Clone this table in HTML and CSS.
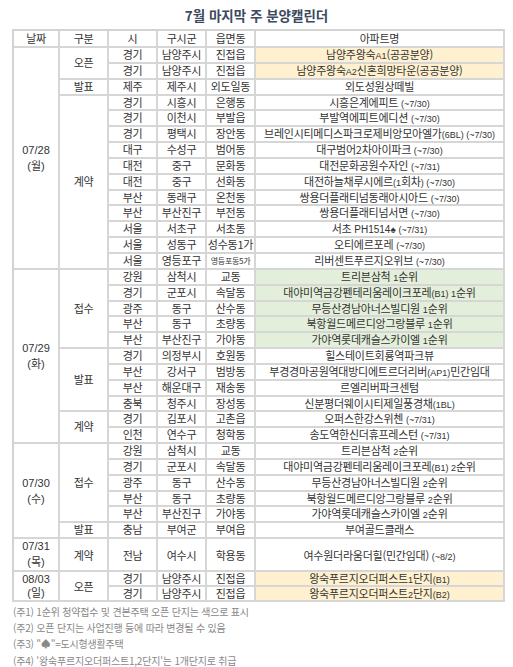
FILE: index.html
```html
<!DOCTYPE html>
<html lang="ko">
<head>
<meta charset="utf-8">
<title>7월 마지막 주 분양캘린더</title>
<link rel="stylesheet" href="styles.css">
</head>
<body>
<h1 class="title">7월 마지막 주 분양캘린더</h1>
<table class="cal">
<colgroup>
<col class="c-date"><col class="c-type"><col class="c-si"><col class="c-gu"><col class="c-dong"><col class="c-apt">
</colgroup>
<thead>
<tr><th>날짜</th><th>구분</th><th>시</th><th>구시군</th><th>읍면동</th><th>아파트명</th></tr>
</thead>
<tbody>
<tr><td rowspan="14" class="date">07/28<br>(월)</td><td rowspan="2">오픈</td><td>경기</td><td>남양주시</td><td>진접읍</td><td class="apt y">남양주왕숙<span class="en">A1</span>(공공분양)</td></tr>
<tr><td>경기</td><td>남양주시</td><td>진접읍</td><td class="apt y">남양주왕숙<span class="en">A2</span>신혼희망타운(공공분양)</td></tr>
<tr><td>발표</td><td>제주</td><td>제주시</td><td>외도일동</td><td class="apt">외도성원상떼빌</td></tr>
<tr><td rowspan="11">계약</td><td>경기</td><td>시흥시</td><td>은행동</td><td class="apt">시흥은계에피트 <span class="en">(~7/30)</span></td></tr>
<tr><td>경기</td><td>이천시</td><td>부발읍</td><td class="apt">부발역에피트에디션 <span class="en">(~7/30)</span></td></tr>
<tr><td>경기</td><td>평택시</td><td>장안동</td><td class="apt">브레인시티메디스파크로제비앙모아엘가<span class="en">(6BL) (~7/30)</span></td></tr>
<tr><td>대구</td><td>수성구</td><td>범어동</td><td class="apt">대구범어2차아이파크 <span class="en">(~7/30)</span></td></tr>
<tr><td>대전</td><td>중구</td><td>문화동</td><td class="apt">대전문화공원수자인 <span class="en">(~7/31)</span></td></tr>
<tr><td>대전</td><td>중구</td><td>선화동</td><td class="apt">대전하늘채루시에르<span class="en">(1</span>회차<span class="en">) (~7/30)</span></td></tr>
<tr><td>부산</td><td>동래구</td><td>온천동</td><td class="apt">쌍용더플래티넘동래아시아드 <span class="en">(~7/30)</span></td></tr>
<tr><td>부산</td><td>부산진구</td><td>부전동</td><td class="apt">쌍용더플래티넘서면 <span class="en">(~7/30)</span></td></tr>
<tr><td>서울</td><td>서초구</td><td>서초동</td><td class="apt">서초 <span class="en big">PH1514♠</span> <span class="en">(~7/31)</span></td></tr>
<tr><td>서울</td><td>성동구</td><td>성수동1가</td><td class="apt">오티에르포레 <span class="en">(~7/30)</span></td></tr>
<tr><td>서울</td><td>영등포구</td><td class="tiny">영등포동5가</td><td class="apt">리버센트푸르지오위브 <span class="en">(~7/30)</span></td></tr>

<tr><td rowspan="11" class="date">07/29<br>(화)</td><td rowspan="5">접수</td><td>강원</td><td>삼척시</td><td>교동</td><td class="apt g">트리븐삼척 <span class="en">1</span>순위</td></tr>
<tr><td>경기</td><td>군포시</td><td>속달동</td><td class="apt g">대야미역금강펜테리움레이크포레<span class="en">(B1) 1</span>순위</td></tr>
<tr><td>광주</td><td>동구</td><td>산수동</td><td class="apt g">무등산경남아너스빌디원 <span class="en">1</span>순위</td></tr>
<tr><td>부산</td><td>동구</td><td>초량동</td><td class="apt g">북항월드메르디앙그랑블루 <span class="en">1</span>순위</td></tr>
<tr><td>부산</td><td>부산진구</td><td>가야동</td><td class="apt g">가야역롯데캐슬스카이엘 <span class="en">1</span>순위</td></tr>
<tr><td rowspan="4">발표</td><td>경기</td><td>의정부시</td><td>호원동</td><td class="apt">힐스테이트회룡역파크뷰</td></tr>
<tr><td>부산</td><td>강서구</td><td>범방동</td><td class="apt">부경경마공원역대방디에트르더리버<span class="en">(AP1)</span>민간임대</td></tr>
<tr><td>부산</td><td>해운대구</td><td>재송동</td><td class="apt">르엘리버파크센텀</td></tr>
<tr><td>충북</td><td>청주시</td><td>장성동</td><td class="apt">신분평더웨이시티제일풍경채<span class="en">(1BL)</span></td></tr>
<tr><td rowspan="2">계약</td><td>경기</td><td>김포시</td><td>고촌읍</td><td class="apt">오퍼스한강스위첸 <span class="en">(~7/31)</span></td></tr>
<tr><td>인천</td><td>연수구</td><td>청학동</td><td class="apt">송도역한신더휴프레스턴 <span class="en">(~7/31)</span></td></tr>

<tr><td rowspan="6" class="date">07/30<br>(수)</td><td rowspan="5">접수</td><td>강원</td><td>삼척시</td><td>교동</td><td class="apt">트리븐삼척 <span class="en">2</span>순위</td></tr>
<tr><td>경기</td><td>군포시</td><td>속달동</td><td class="apt">대야미역금강펜테리움레이크포레<span class="en">(B1) 2</span>순위</td></tr>
<tr><td>광주</td><td>동구</td><td>산수동</td><td class="apt">무등산경남아너스빌디원 <span class="en">2</span>순위</td></tr>
<tr><td>부산</td><td>동구</td><td>초량동</td><td class="apt">북항월드메르디앙그랑블루 <span class="en">2</span>순위</td></tr>
<tr><td>부산</td><td>부산진구</td><td>가야동</td><td class="apt">가야역롯데캐슬스카이엘 <span class="en">2</span>순위</td></tr>
<tr><td>발표</td><td>충남</td><td>부여군</td><td>부여읍</td><td class="apt">부여골드클래스</td></tr>

<tr class="tall"><td class="date">07/31<br>(목)</td><td>계약</td><td>전남</td><td>여수시</td><td>학용동</td><td class="apt">여수원더라움더힐(민간임대) <span class="en">(~8/2)</span></td></tr>

<tr class="short"><td rowspan="2" class="date">08/03<br>(일)</td><td rowspan="2">오픈</td><td>경기</td><td>남양주시</td><td>진접읍</td><td class="apt y">왕숙푸르지오더퍼스트<span class="en">1</span>단지<span class="en">(B1)</span></td></tr>
<tr class="short"><td>경기</td><td>남양주시</td><td>진접읍</td><td class="apt y">왕숙푸르지오더퍼스트<span class="en">2</span>단지<span class="en">(B2)</span></td></tr>
</tbody>
</table>
<div class="notes">
<p>(주1) 1순위 청약접수 및 견본주택 오픈 단지는 색으로 표시</p>
<p>(주2) 오픈 단지는 사업진행 등에 따라 변경될 수 있음</p>
<p>(주3) "♠"=도시형생활주택</p>
<p>(주4) '왕숙푸르지오더퍼스트1,2단지'는 1개단지로 취급</p>
</div>
</body>
</html>
```
FILE: styles.css
```css
body {
  margin: 0;
  background: #ffffff;
  font-family: "Noto Sans CJK KR", "Noto Sans", sans-serif;
  color: #333333;
}

.title {
  margin: 0;
  height: 29px;
  line-height: 30px;
  text-align: center;
  font-size: 13.5px;
  font-weight: 700;
  letter-spacing: 0;
  color: #3b4a5d;
}

.cal {
  margin-left: 12px;
  width: 493px;
  table-layout: fixed;
  border-collapse: separate;
  border-spacing: 0;
  border-top: 2px solid #d3d3d3;
  border-left: 2px solid #d3d3d3;
}

.c-date { width: 46px; }
.c-type { width: 49px; }
.c-si { width: 49px; }
.c-gu { width: 49px; }
.c-dong { width: 49px; }
.c-apt { width: 249px; }

.cal th,
.cal td {
  border: 0;
  border-right: 2px solid #d6d6d6;
  border-bottom: 2px solid #d6d6d6;
  padding: 0;
  height: 13.85px;
  line-height: 13.85px;
  font-size: 11px;
  font-weight: 400;
  letter-spacing: -0.25px;
  text-align: center;
  vertical-align: middle;
  white-space: nowrap;
  overflow: visible;
  color: #333333;
}

.cal th {
  height: 15px;
  line-height: 15px;
}

.cal td.date {
  font-family: "Liberation Sans", "Noto Sans CJK KR", sans-serif;
  line-height: 16px;
  letter-spacing: 0;
}

.cal tr.tall td {
  height: 31px;
  line-height: 14px;
}

.cal tr.tall td.date {
  line-height: 15.5px;
}

.cal tr.short td {
  height: 13px;
  line-height: 13px;
}

.cal tr.short td.date {
  line-height: 14px;
}

.cal td.tiny {
  font-size: 8px;
  letter-spacing: -0.3px;
}

.cal td.y { background: #fff1cf; }
.cal td.g { background: #e3efda; }

.en {
  font-family: "Liberation Sans", sans-serif;
  font-size: 9px;
  line-height: 1;
  letter-spacing: 0;
}

.en.big {
  font-size: 10px;
}

.notes {
  padding: 1.5px 0 0 13px;
  font-size: 10px;
  line-height: 16.3px;
  letter-spacing: -0.2px;
  color: #888888;
}

.notes p {
  margin: 0;
}
```
